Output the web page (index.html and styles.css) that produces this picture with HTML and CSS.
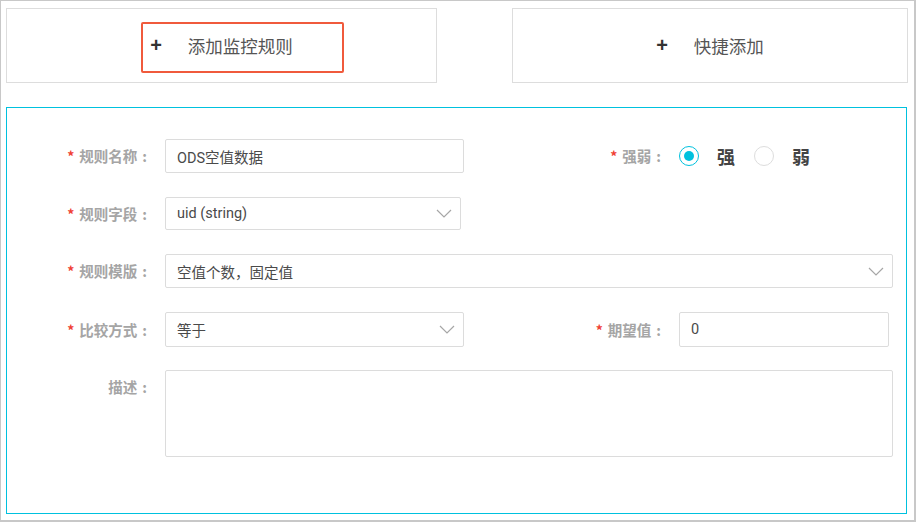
FILE: index.html
```html
<!DOCTYPE html>
<html lang="zh-CN">
<head>
  <meta charset="UTF-8" />
  <meta name="viewport" content="width=device-width, initial-scale=1.0"/>
  <title>监控规则</title>
  <link rel="stylesheet" href="styles.css">
</head>
<body>

  <div class="frame">

    <div class="add-bar">
      <div class="add-btn add-rule">
        <span class="plus">+</span>
        <span class="add-text">添加监控规则</span>
        <span class="highlight"></span>
      </div>
      <div class="add-btn add-quick">
        <span class="plus">+</span>
        <span class="add-text">快捷添加</span>
      </div>
    </div>

    <div class="rule-panel">

      <div class="row">
        <div class="field">
          <label class="label"><i class="req">*</i>规则名称<span class="colon">:</span></label>
          <input class="input w-300" type="text" value="ODS空值数据">
        </div>
        <div class="field field-right">
          <label class="label"><i class="req">*</i>强弱<span class="colon">:</span></label>
          <div class="radios">
            <span class="radio checked"></span>
            <span class="radio-text">强</span>
            <span class="radio"></span>
            <span class="radio-text">弱</span>
          </div>
        </div>
      </div>

      <div class="row row-short">
        <div class="field">
          <label class="label"><i class="req">*</i>规则字段<span class="colon">:</span></label>
          <div class="select w-296">
            <span>uid (string)</span>
            <svg class="chevron" width="16" height="9" viewBox="0 0 16 9"><polyline points="1,1 8,8 15,1" fill="none" stroke="#a6a6a6" stroke-width="1.2"/></svg>
          </div>
        </div>
      </div>

      <div class="row">
        <div class="field field-wide">
          <label class="label"><i class="req">*</i>规则模版<span class="colon">:</span></label>
          <div class="select grow">
            <span>空值个数，固定值</span>
            <svg class="chevron" width="16" height="9" viewBox="0 0 16 9"><polyline points="1,1 8,8 15,1" fill="none" stroke="#a6a6a6" stroke-width="1.2"/></svg>
          </div>
        </div>
      </div>

      <div class="row row-tall">
        <div class="field">
          <label class="label"><i class="req">*</i>比较方式<span class="colon">:</span></label>
          <div class="select w-300">
            <span>等于</span>
            <svg class="chevron" width="16" height="9" viewBox="0 0 16 9"><polyline points="1,1 8,8 15,1" fill="none" stroke="#a6a6a6" stroke-width="1.2"/></svg>
          </div>
        </div>
        <div class="field field-right">
          <label class="label"><i class="req">*</i>期望值<span class="colon">:</span></label>
          <input class="input w-210" type="text" value="0">
        </div>
      </div>

      <div class="row row-top">
        <div class="field field-wide field-top">
          <label class="label">描述<span class="colon">:</span></label>
          <textarea class="textarea grow"></textarea>
        </div>
      </div>

    </div>
  </div>

</body>
</html>
```

FILE: styles.css
```css
* {
  box-sizing: border-box;
}

body {
  margin: 0;
  background: #fff;
  font-family: Roboto, "Noto Sans CJK SC", sans-serif;
  color: #333;
}

.frame {
  width: 916px;
  height: 522px;
  border: 1px solid #c8c8c8;
  border-right-width: 2px;
  border-bottom-width: 2px;
  padding: 7px 0 0 5px;
}

/* top add buttons */
.add-bar {
  display: flex;
  gap: 75px;
}

.add-btn {
  position: relative;
  height: 75px;
  border: 1px solid #ddd;
  display: flex;
  align-items: center;
  justify-content: center;
  gap: 26px;
}

.add-rule {
  width: 431px;
}

.add-quick {
  width: 396px;
}

.plus {
  font-family: "Liberation Sans", sans-serif;
  font-size: 20px;
  font-weight: bold;
  color: #333;
}

.add-text {
  font-family: "Noto Sans CJK SC", sans-serif;
  font-size: 17.5px;
  color: #555;
}

.highlight {
  position: absolute;
  left: 134px;
  top: 13px;
  width: 203px;
  height: 51px;
  border: 2px solid #f05a3c;
  border-radius: 2px;
}

/* form panel */
.rule-panel {
  margin-top: 24px;
  width: 901px;
  height: 407px;
  border: 1px solid #00c1de;
  padding: 31px 13px 0 0;
}

.row {
  display: flex;
  align-items: center;
  height: 34px;
  margin-bottom: 24px;
}

.row-short {
  height: 33px;
}

.row-tall {
  height: 35px;
  margin-bottom: 23px;
}

.row-top {
  height: 87px;
  align-items: flex-start;
}

.field {
  display: flex;
  align-items: center;
  gap: 18px;
  height: 100%;
}

.field-right {
  margin-left: 57px;
}

.field-wide {
  flex: 1;
}

.field-top {
  align-items: flex-start;
}

.label {
  width: 140px;
  text-align: right;
  font-family: "Noto Sans CJK SC", sans-serif;
  font-size: 14.5px;
  font-weight: bold;
  color: #a5a5a5;
  line-height: 34px;
  white-space: nowrap;
}

.req {
  font-style: normal;
  color: #f04134;
  font-size: 14px;
  margin-right: 5px;
}

.colon {
  margin-left: 5px;
}

.input,
.select,
.textarea {
  height: 100%;
  border: 1px solid #dcdcdc;
  border-radius: 2px;
  background: #fff;
  font-family: Roboto, "Noto Sans CJK SC", sans-serif;
  font-size: 14.5px;
  color: #4a4a4a;
  padding: 0 11px;
  outline: none;
}

.select {
  display: flex;
  align-items: center;
  justify-content: space-between;
  padding-right: 8px;
}

.textarea {
  resize: none;
  padding: 8px 11px;
}

.w-300 {
  width: 299px;
}

.w-296 {
  width: 296px;
}

.w-210 {
  width: 210px;
}

.grow {
  flex: 1;
}

.chevron {
  display: block;
}

/* strong / weak radio */
.radios {
  display: flex;
  align-items: center;
}

.radio {
  width: 20px;
  height: 20px;
  border: 1px solid #ddd;
  border-radius: 50%;
  position: relative;
}

.radio.checked {
  border-color: #00c1de;
}

.radio.checked::after {
  content: "";
  position: absolute;
  left: 4px;
  top: 4px;
  width: 10px;
  height: 10px;
  border-radius: 50%;
  background: #00c1de;
}

.radio-text {
  font-family: "Noto Sans CJK SC", sans-serif;
  font-size: 18px;
  font-weight: bold;
  color: #444;
  margin: 0 19px 0 18px;
}
```
